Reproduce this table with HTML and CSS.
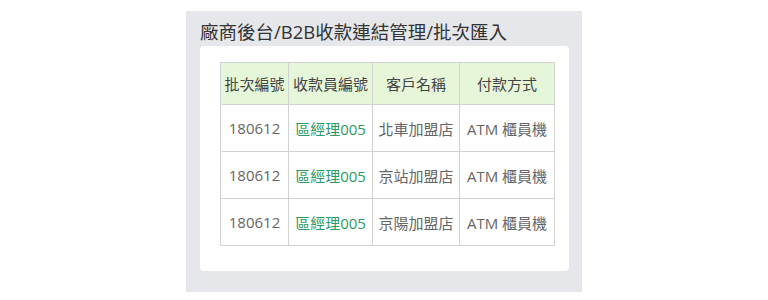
FILE: index.html
```html
<!DOCTYPE html>
<html lang="zh-Hant">
<head>
<meta charset="utf-8">
<link rel="stylesheet" href="styles.css">
</head>
<body>
<div class="panel">
  <h1 class="title">廠商後台/B2B收款連結管理/批次匯入</h1>
  <div class="card">
    <table class="grid">
      <colgroup>
        <col class="c1"><col class="c2"><col class="c3"><col class="c4">
      </colgroup>
      <thead>
        <tr><th>批次編號</th><th>收款員編號</th><th>客戶名稱</th><th>付款方式</th></tr>
      </thead>
      <tbody>
        <tr><td>180612</td><td class="link">區經理005</td><td>北車加盟店</td><td>ATM 櫃員機</td></tr>
        <tr><td>180612</td><td class="link">區經理005</td><td>京站加盟店</td><td>ATM 櫃員機</td></tr>
        <tr><td>180612</td><td class="link">區經理005</td><td>京陽加盟店</td><td>ATM 櫃員機</td></tr>
      </tbody>
    </table>
  </div>
</div>
</body>
</html>
```

FILE: styles.css
```css
html, body {
  margin: 0;
  padding: 0;
  background: #ffffff;
}
body {
  font-family: "Open Sans", "Noto Sans CJK TC", sans-serif;
  color: #333;
}
.panel {
  width: 396px;
  margin: 11px auto 0;
  background: #e5e7ea;
  padding: 9px 13px 21px 14px;
  box-sizing: border-box;
}
.title {
  margin: 0 0 2px;
  font-size: 18.5px;
  font-weight: normal;
  line-height: 24px;
  color: #333;
  letter-spacing: 0;
}
.card {
  background: #fff;
  border-radius: 4px;
  padding: 16px 15px 25px 20px;
}
.grid {
  border-collapse: collapse;
  table-layout: fixed;
  width: 334px;
  font-size: 15px;
}
.c1 { width: 68px; }
.c2 { width: 84px; }
.c3 { width: 87px; }
.c4 { width: 95px; }
.grid th, .grid td {
  border: 1px solid #d2d2d2;
  text-align: center;
  vertical-align: middle;
  padding: 0;
  white-space: nowrap;
}
.grid th {
  background: #e6f6d9;
  color: #444;
  font-weight: normal;
  height: 41px;
}
.grid td {
  color: #666;
  height: 46px;
}
.grid td.link {
  color: #2c9a66;
}
```
